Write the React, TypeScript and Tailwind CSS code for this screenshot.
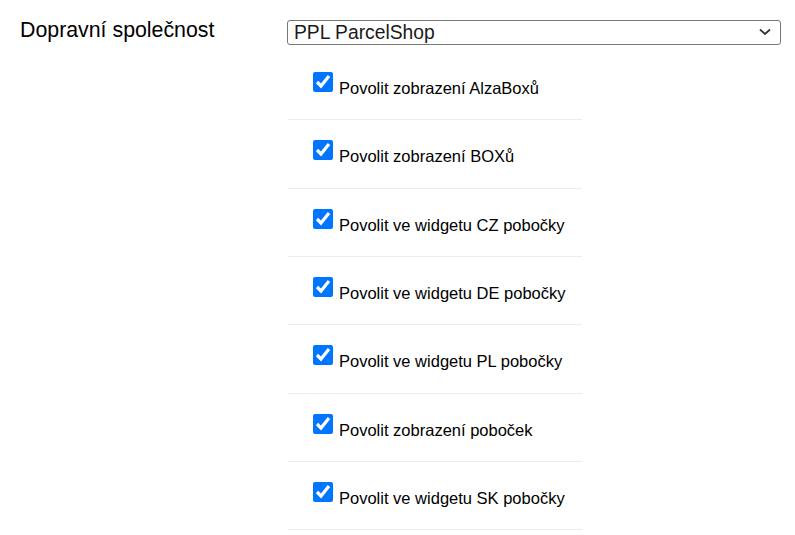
import React from "react";

const options = [
  "Povolit zobrazení AlzaBoxů",
  "Povolit zobrazení BOXů",
  "Povolit ve widgetu CZ pobočky",
  "Povolit ve widgetu DE pobočky",
  "Povolit ve widgetu PL pobočky",
  "Povolit zobrazení poboček",
  "Povolit ve widgetu SK pobočky",
];

export default function App() {
  return (
    <div className="min-h-[535px] bg-white text-black font-['Liberation_Sans',Arial,sans-serif] pl-[20px] pt-[18px] flex">
      <div className="w-[267px] text-[21.33px] leading-[24px] shrink-0">Dopravní společnost</div>

      <div className="mt-[2px] w-[494px]">
        {/* carrier select */}
        <div className="h-[25px] border border-[#767676] rounded-[3px] flex items-center justify-between pl-[6px] pr-[9px] text-[19.3px] leading-[22px] text-[#1a1a1a]">
          <span className="pt-[1px]">PPL ParcelShop</span>
          <svg width="12" height="8" viewBox="0 0 12 8" className="mb-[1px]">
            <path d="M1 1.5 L6 6 L11 1.5" fill="none" stroke="#333" strokeWidth="1.8" />
          </svg>
        </div>

        <ul className="mt-[7px] ml-[1px] w-[294px]">
          {options.map((o) => (
            <li key={o} className="h-[68.33px] border-b border-[#ebebeb] pt-[20px] pl-[25px] flex items-start gap-[6px]">
              <input type="checkbox" defaultChecked className="w-5 h-5 m-0 accent-[#0075ff] shrink-0" />
              <span className="mt-[7px] text-[16.5px] leading-[19px]">{o}</span>
            </li>
          ))}
        </ul>
      </div>
    </div>
  );
}
